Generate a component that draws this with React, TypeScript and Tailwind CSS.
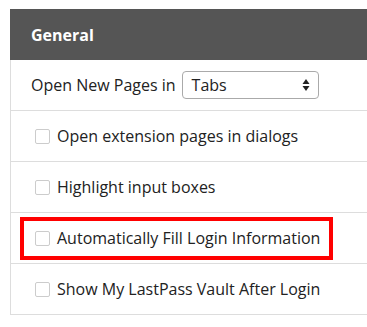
export default function App() {
  const options = [
    { label: "Open extension pages in dialogs", highlighted: false },
    { label: "Highlight input boxes", highlighted: false },
    { label: "Automatically Fill Login Information", highlighted: true },
    { label: "Show My LastPass Vault After Login", highlighted: false },
  ];

  return (
    <div className="h-[327px] w-[367px] overflow-hidden bg-white pt-[9px] pl-[10px] font-['Open_Sans',sans-serif] text-[16px] text-[#222]">
      {/* Section header */}
      <div className="flex h-[51px] items-center bg-[#555] pl-[21px] font-bold text-white">
        General
      </div>

      <div className="border-l border-[#ddd]">
        <div className="flex h-[51px] items-center gap-[6px] border-b border-[#ddd] pl-[20px]">
          <span>Open New Pages in</span>
          <div className="relative flex h-[28px] w-[137px] items-center rounded-[4px] border border-[#aaa] pl-[9px]">
            Tabs
            <svg className="absolute right-[8px] top-1/2 -translate-y-1/2" width="8" height="14" viewBox="0 0 8 14">
              <path d="M4 1 L7.5 6 H0.5 Z" fill="#222" />
              <path d="M4 13 L7.5 8 H0.5 Z" fill="#222" />
            </svg>
          </div>
        </div>

        {options.map((o) => (
          <div key={o.label} className="flex h-[51px] items-center border-b border-[#ddd] pl-[9px] pr-[34px]">
            <div
              className={
                o.highlighted
                  ? "flex h-[43px] flex-1 items-center gap-[7px] border-4 border-[#ff0000] pl-[11px]"
                  : "flex h-[43px] flex-1 items-center gap-[7px] border-4 border-transparent pl-[11px]"
              }
            >
              <span className="h-[15px] w-[15px] shrink-0 rounded-[2px] border border-[#ccc] bg-white" />
              <span>{o.label}</span>
            </div>
          </div>
        ))}
      </div>
    </div>
  );
}
